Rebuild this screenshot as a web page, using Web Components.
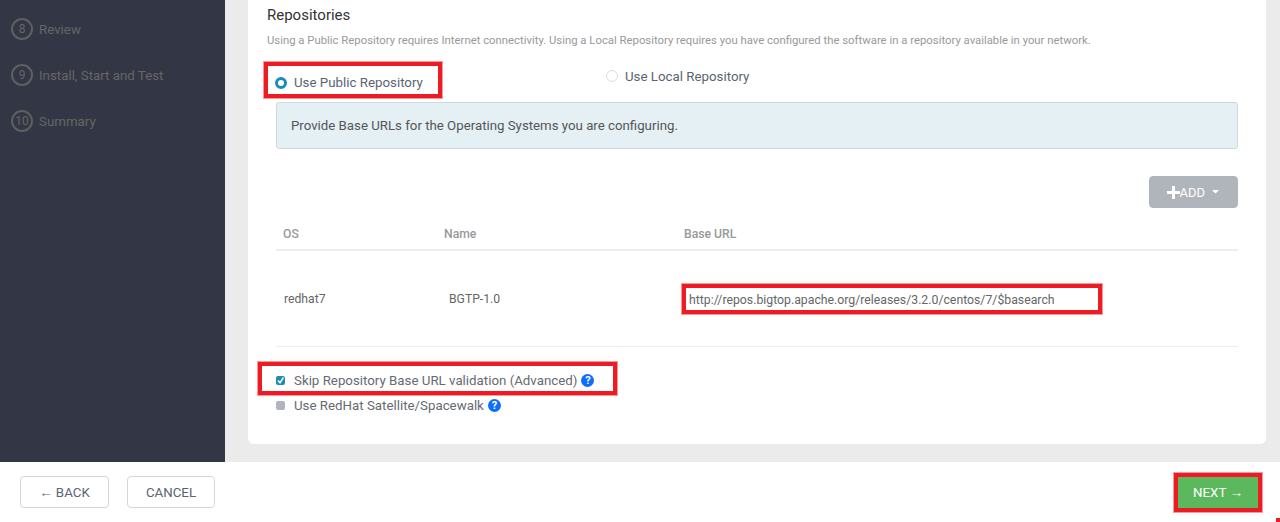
<!DOCTYPE html>
<html><head><meta charset="utf-8">
<style>
html,body{margin:0;padding:0;background:#fff}
body{font-family:Roboto,"Liberation Sans",sans-serif;width:1280px;height:522px;overflow:hidden}
</style></head><body>
<x-app></x-app>
<template id="t-step"><style>
:host{display:flex;align-items:center;height:24px;margin-bottom:22px;color:#666;font-size:13.3px}
.n{box-sizing:border-box;width:22px;height:22px;border:2px solid #5f5f5f;border-radius:50%;margin-right:6px;margin-left:11px;display:flex;align-items:center;justify-content:center;font-size:12px}
</style><span class="n"><slot name="n"></slot></span><slot></slot></template>
<template id="t-side"><style>
:host{display:block;width:225px;background:#333644;padding-top:17px;box-sizing:border-box;flex:none;margin-right:1px}
</style><slot></slot></template>
<template id="t-mark"><style>
:host{display:flex;border:4px solid #ed1c24;box-shadow:0 0 0 1px rgba(237,28,36,.45);box-sizing:border-box}
</style><slot></slot></template>
<template id="t-help"><style>
:host{display:inline-flex;width:13px;height:13px;border-radius:50%;background:#0d6efd;color:#fff;font:700 11px/13px Roboto,sans-serif;align-items:center;justify-content:center;flex:none;margin-left:4px}
</style>?</template>
<template id="t-btn"><style>
:host{display:inline-flex;box-sizing:border-box;align-items:center;justify-content:center;height:32px;border-radius:4px;font-size:13.3px;border:1px solid #d5d6d8;color:#5b6472;background:#fff}
:host([kind=add]){background:#b0b4bb;border-color:#b0b4bb;color:#fff;width:89px;padding-right:2px;font-size:13px}
:host([kind=next]){background:#5cb85c;border:0;border-radius:0;color:#fff;width:81px;height:31px;font-weight:400}
</style><slot></slot></template>
<template id="t-check"><style>
:host{display:flex;align-items:center;font-size:13.3px;color:#666a72}
.b{width:9px;height:9px;border-radius:2px;background:#b0b4bf;margin-right:9px;flex:none;display:flex}
:host([checked]) .b{background:#1a8cba}
svg{display:none}
:host([checked]) svg{display:block}
</style><span class="b"><svg width="9" height="9" viewBox="0 0 9 9"><path d="M2 4.500 4 6.800 7.400 1.500" fill="none" stroke="#fff" stroke-width="1.500"/></svg></span><slot></slot></template>
<template id="t-radio"><style>
:host{display:flex;align-items:center;font-size:13.3px;color:#5b6472}
.r{box-sizing:border-box;width:12px;height:12px;border-radius:50%;border:1px solid #dedede;margin-right:7px;flex:none;background:#fff}
:host([on]) .r{border:3.500px solid #1a8cba}
</style><span class="r"></span><slot></slot></template>
<template id="t-table"><style>
:host{display:block;margin-left:9px;width:962px;font-size:12.2px}
.h,.r{display:grid;grid-template-columns:161px 240px 1fr;box-sizing:border-box}
.h{height:43px;align-items:center;color:#999;border-bottom:2px solid #eeeeee;padding-left:7px;padding-top:10px;font-weight:500}
.r{height:96px;align-items:center;color:#666;border-bottom:1px solid #eee;padding-left:8px}
.u{width:420px;height:30px;align-items:center;font-size:12.27px;color:#666;padding:2px 0 0 3px;margin-left:-3px;white-space:nowrap}
.c2{padding-left:4px}
</style>
<div class="h"><span>OS</span><span>Name</span><span>Base URL</span></div>
<div class="r"><span>redhat7</span><span class="c2">BGTP-1.0</span><x-mark class="u">http://repos.bigtop.apache.org/releases/3.2.0/centos/7/$basearch</x-mark></div>
</template>
<template id="t-card"><style>
:host{display:block;width:1018px;height:444px;margin-left:22px;background:#fff;border-radius:0 0 6px 6px;box-sizing:border-box;padding:5px 0 0 19px;flex:none}
h3{margin:0;font:400 15px/20px Roboto,sans-serif;color:#333}
p{margin:5px 0 0;font-size:11.33px;line-height:20px;color:#999;white-space:nowrap}
.radios{display:flex;margin:12px 0 0 -3px;align-items:flex-start}
.radios x-mark{width:178px;height:36px;padding:5px 0 0 7px;align-items:center}
.loc{margin:4px 0 0 164px;height:20px}
.alert{box-sizing:border-box;margin:4px 0 0 9px;width:962px;height:47px;background:#e5f0f5;border:1px solid #ced9df;border-radius:3px;font-size:13.25px;color:#555;display:flex;align-items:center;padding-left:14px}
.addrow{display:flex;justify-content:flex-end;margin:27px 0 0;width:971px}
.skip{width:359px;height:33px;margin:15px 0 0 -9px;align-items:center;padding:4px 0 0 14px}
.sat{margin:0 0 0 9px;height:20px}
</style>
<h3>Repositories</h3>
<p>Using a Public Repository requires Internet connectivity. Using a Local Repository requires you have configured the software in a repository available in your network.</p>
<div class="radios"><x-mark><x-radio on>Use Public Repository</x-radio></x-mark><x-radio class="loc">Use Local Repository</x-radio></div>
<div class="alert">Provide Base URLs for the Operating Systems you are configuring.</div>
<div class="addrow"><x-btn kind="add"><svg width="13" height="13" viewBox="0 0 13 13"><path d="M5 0h3v5h5v3H8v5H5V8H0V5h5z" fill="#fff"/></svg>ADD&nbsp;&nbsp;<svg width="7" height="4" viewBox="0 0 7 4"><path d="M0 0h7L3.500 3.500z" fill="#fff"/></svg></x-btn></div>
<x-table></x-table>
<x-mark class="skip"><x-check checked>Skip Repository Base URL validation (Advanced)<x-help></x-help></x-check></x-mark>
<x-check class="sat">Use RedHat Satellite/Spacewalk<x-help></x-help></x-check>
</template>
<template id="t-footer"><style>
:host{display:flex;height:60px;box-sizing:border-box;background:#fff;align-items:center;padding-left:20px;position:relative}
.back{width:89px}.cancel{width:88px;margin-left:18px}
.next{margin-left:auto;margin-right:18px;width:88px;height:39px;margin-top:1px}
.next x-btn{width:80px}
.a{font-family:"Liberation Sans",sans-serif}
.dot{position:absolute;right:0;bottom:0;width:4px;height:4px;background:#ed1c24}
</style>
<x-btn class="back"><span class="a">←</span>&nbsp;BACK</x-btn><x-btn class="cancel">CANCEL</x-btn>
<x-mark class="next"><x-btn kind="next">NEXT&nbsp;<span class="a">→</span></x-btn></x-mark><span class="dot"></span></template>
<template id="t-app"><style>
:host{display:flex;flex-direction:column;width:1280px;height:522px}
.main{display:flex;height:462px;background:#ebebeb;overflow:hidden}
</style>
<div class="main"><x-side>
<x-step><span slot="n">8</span>Review</x-step>
<x-step><span slot="n">9</span>Install, Start and Test</x-step>
<x-step><span slot="n">10</span>Summary</x-step>
</x-side><x-card></x-card></div><x-footer></x-footer></template>
<script>
const map={'x-step':'t-step','x-side':'t-side','x-mark':'t-mark','x-help':'t-help','x-btn':'t-btn','x-check':'t-check','x-radio':'t-radio','x-table':'t-table','x-card':'t-card','x-footer':'t-footer','x-app':'t-app'};
for(const [n,t] of Object.entries(map)){
  customElements.define(n,class extends HTMLElement{constructor(){super();this.attachShadow({mode:'open'}).appendChild(document.getElementById(t).content.cloneNode(true));}});
}
</script>
</body></html>
